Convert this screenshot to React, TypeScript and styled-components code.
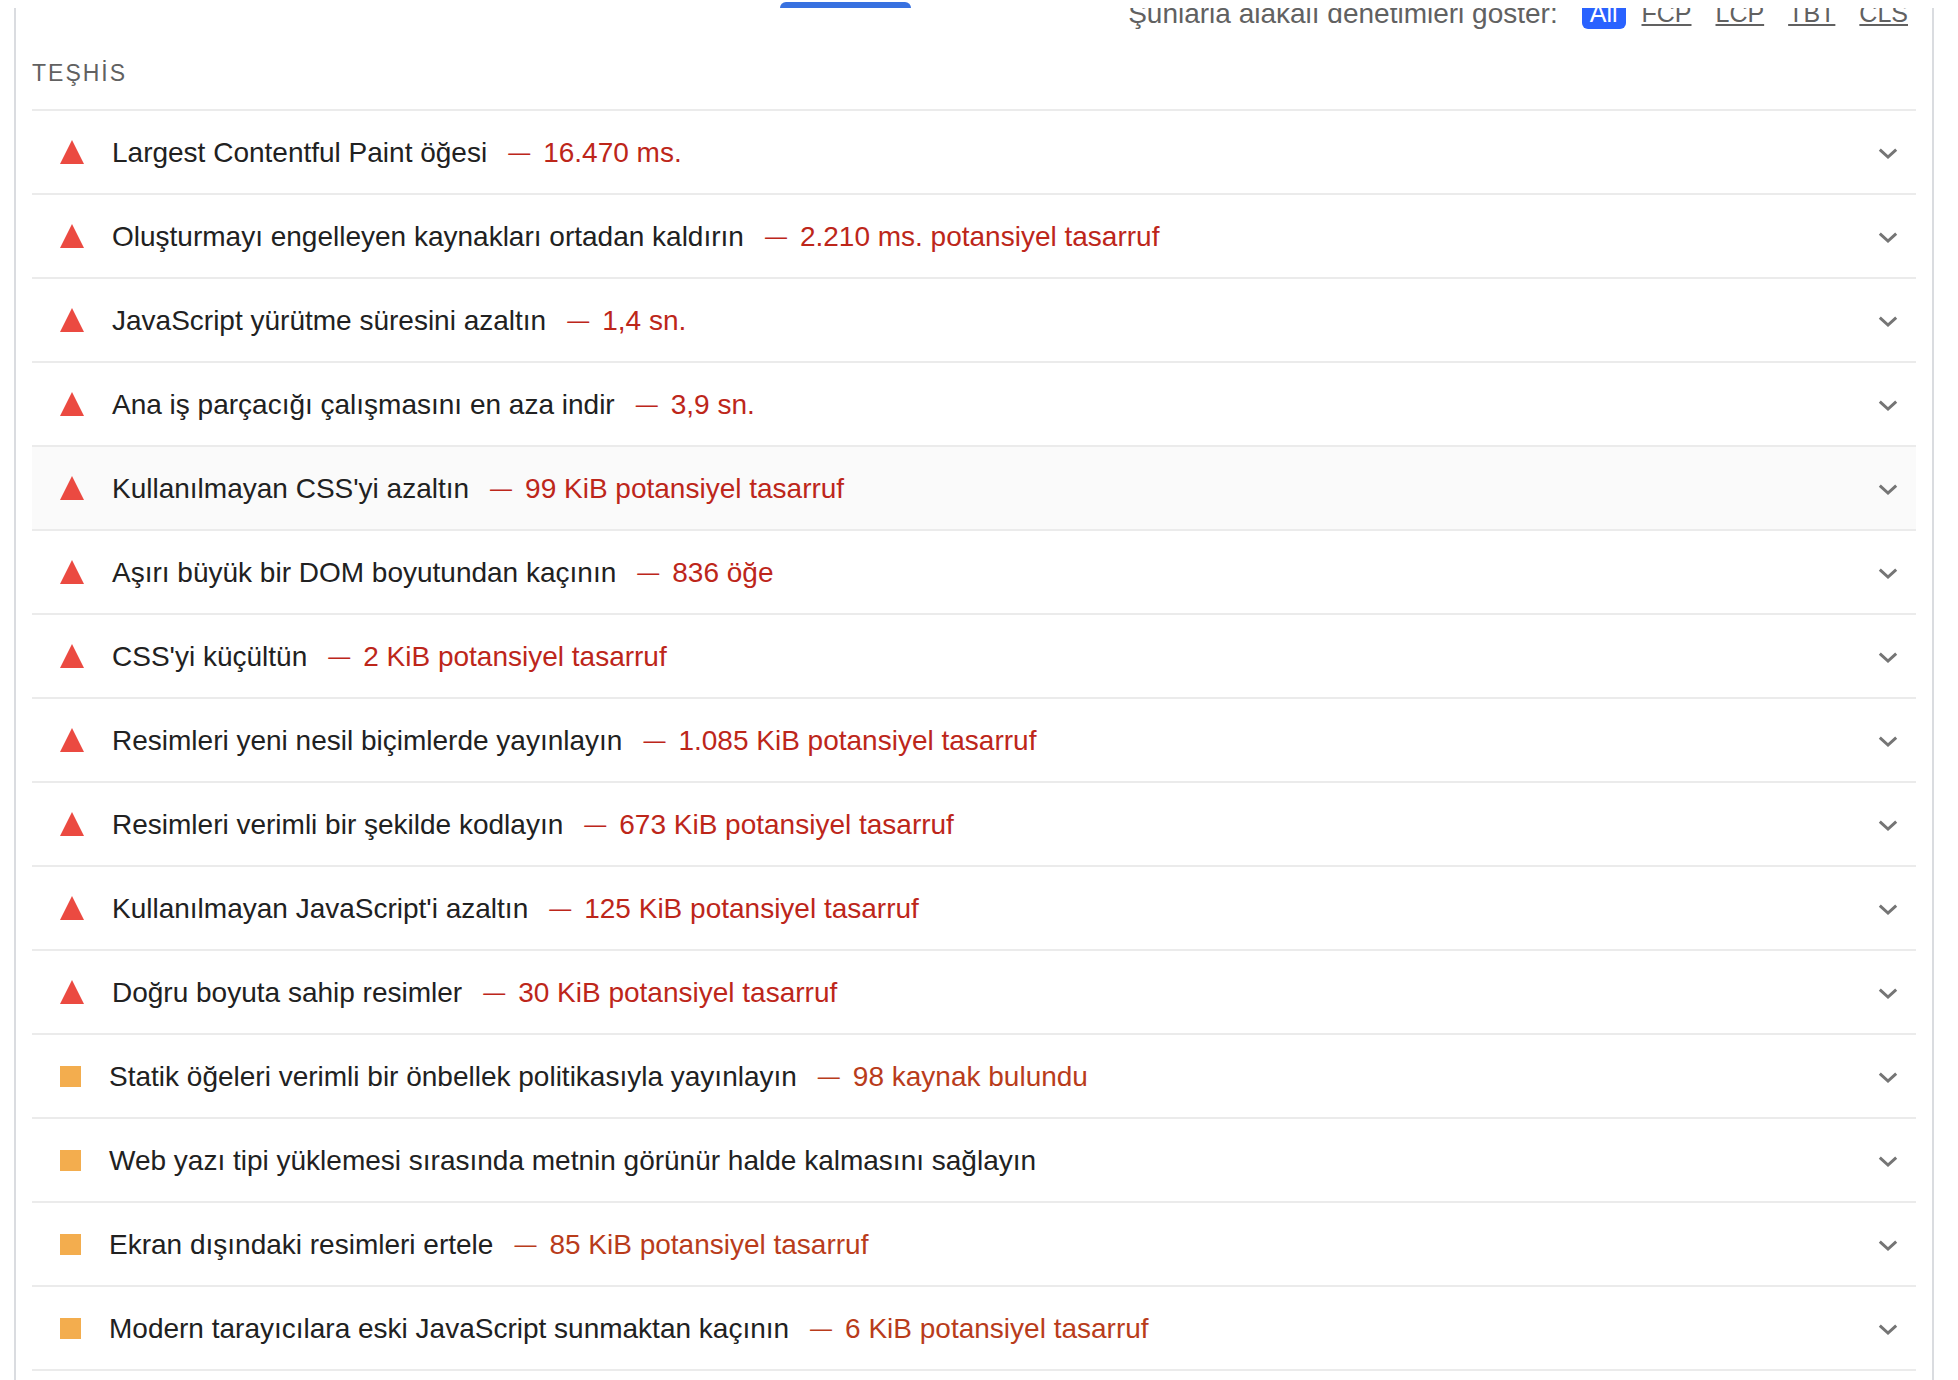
import React, { useState } from "react";
import styled, { createGlobalStyle, css } from "styled-components";

type Level = "fail" | "average";

interface Audit {
  title: string;
  value?: string;
  level: Level;
  active?: boolean;
}

const audits: Audit[] = [
  { level: "fail", title: "Largest Contentful Paint öğesi", value: "16.470 ms." },
  { level: "fail", title: "Oluşturmayı engelleyen kaynakları ortadan kaldırın", value: "2.210 ms. potansiyel tasarruf" },
  { level: "fail", title: "JavaScript yürütme süresini azaltın", value: "1,4 sn." },
  { level: "fail", title: "Ana iş parçacığı çalışmasını en aza indir", value: "3,9 sn." },
  { level: "fail", title: "Kullanılmayan CSS'yi azaltın", value: "99 KiB potansiyel tasarruf", active: true },
  { level: "fail", title: "Aşırı büyük bir DOM boyutundan kaçının", value: "836 öğe" },
  { level: "fail", title: "CSS'yi küçültün", value: "2 KiB potansiyel tasarruf" },
  { level: "fail", title: "Resimleri yeni nesil biçimlerde yayınlayın", value: "1.085 KiB potansiyel tasarruf" },
  { level: "fail", title: "Resimleri verimli bir şekilde kodlayın", value: "673 KiB potansiyel tasarruf" },
  { level: "fail", title: "Kullanılmayan JavaScript'i azaltın", value: "125 KiB potansiyel tasarruf" },
  { level: "fail", title: "Doğru boyuta sahip resimler", value: "30 KiB potansiyel tasarruf" },
  { level: "average", title: "Statik öğeleri verimli bir önbellek politikasıyla yayınlayın", value: "98 kaynak bulundu" },
  { level: "average", title: "Web yazı tipi yüklemesi sırasında metnin görünür halde kalmasını sağlayın" },
  { level: "average", title: "Ekran dışındaki resimleri ertele", value: "85 KiB potansiyel tasarruf" },
  { level: "average", title: "Modern tarayıcılara eski JavaScript sunmaktan kaçının", value: "6 KiB potansiyel tasarruf" },
];

const metrics = ["All", "FCP", "LCP", "TBT", "CLS"];

const GlobalStyle = createGlobalStyle`
  * { box-sizing: border-box; }
  body {
    margin: 0;
    background: #fff;
    color: #212121;
    font-family: "Liberation Sans", Arial, Helvetica, sans-serif;
  }
`;

const TabStrip = styled.div`
  display: flex;
  height: 8px;
  padding: 2px 0 0 780px;
`;

const TabIndicator = styled.div`
  width: 131px;
  height: 6px;
  border-radius: 6px 6px 0 0;
  background: #3871e0;
`;

const Report = styled.main`
  min-height: calc(100vh - 8px);
  margin: 0 24px 0 14px;
  padding: 0 16px;
  border: solid #dadce0;
  border-width: 0 2px;
  overflow: hidden;
`;

const FilterBar = styled.fieldset`
  display: flex;
  justify-content: flex-end;
  align-items: center;
  gap: 8px;
  margin: -12px 0 0;
  padding: 0;
  border: 0;
  color: #616161;
`;

const FilterCaption = styled.span`
  margin-right: 16px;
  padding-top: 2px;
  font-size: 28px;
  line-height: 31px;
`;

const FilterRadio = styled.input`
  position: absolute;
  opacity: 0;
  pointer-events: none;
`;

const FilterChip = styled.label<{ $selected: boolean }>`
  padding: 3px 8px 1px;
  border-radius: 6px;
  font-size: 25px;
  line-height: 29px;
  cursor: pointer;
  text-decoration: underline;
  text-decoration-thickness: 2px;
  text-underline-offset: 2px;
  ${(p) =>
    p.$selected &&
    css`
      background: #2962ff;
      color: #fff;
      text-decoration: none;
    `}
`;

const GroupTitle = styled.h2`
  margin: 29px 0 21px;
  color: #616161;
  font-size: 23px;
  font-weight: 400;
  line-height: 30px;
  letter-spacing: 2px;
`;

const AuditList = styled.div`
  border-bottom: 2px solid #ebebeb;
`;

const AuditItem = styled.details<{ $active?: boolean }>`
  border-top: 2px solid #ebebeb;
  background: ${(p) => (p.$active ? "#fafafa" : "transparent")};
`;

const AuditHeader = styled.summary`
  display: flex;
  align-items: center;
  height: 82px;
  padding: 0 16px 0 28px;
  font-size: 28px;
  line-height: 36px;
  list-style: none;
  cursor: pointer;
  &::-webkit-details-marker { display: none; }
`;

const ScoreIcon = styled.span<{ $level: Level }>`
  flex: none;
  margin-right: 28px;
  ${(p) =>
    p.$level === "fail"
      ? css`
          width: 24px;
          height: 24px;
          background: #eb4a41;
          clip-path: polygon(50% 0, 100% 100%, 0 100%);
        `
      : css`
          width: 21px;
          height: 21px;
          background: #f3ad4e;
        `}
`;

const AuditTitle = styled.span`
  padding-top: 2px;
`;

const AuditValue = styled.span<{ $level: Level }>`
  display: flex;
  align-items: center;
  padding-top: 2px;
  color: ${(p) => (p.$level === "fail" ? "#bd261a" : "#b93c1b")};
`;

const Dash = styled.span`
  margin: 0 13px 0 21px;
  font-size: 22px;
`;

const Chevron = styled.svg`
  flex: none;
  width: 24px;
  height: 24px;
  margin-left: auto;
`;

export default function App() {
  const [metric, setMetric] = useState("All");
  return (
    <>
      <GlobalStyle />
      <TabStrip>
        <TabIndicator />
      </TabStrip>
      <Report lang="tr">
        <FilterBar>
          <FilterCaption>Şunlarla alakalı denetimleri göster:</FilterCaption>
          {metrics.map((m) => (
            <FilterChip key={m} htmlFor={`metric-${m}`} $selected={m === metric}>
              <FilterRadio
                type="radio"
                name="metric"
                id={`metric-${m}`}
                checked={m === metric}
                onChange={() => setMetric(m)}
              />
              {m}
            </FilterChip>
          ))}
        </FilterBar>
        <GroupTitle>TEŞHİS</GroupTitle>
        <AuditList>
          {audits.map((a) => (
            <AuditItem key={a.title} $active={a.active}>
              <AuditHeader>
                <ScoreIcon $level={a.level} />
                <AuditTitle>{a.title}</AuditTitle>
                {a.value && (
                  <AuditValue $level={a.level}>
                    <Dash>—</Dash>
                    <span>{a.value}</span>
                  </AuditValue>
                )}
                <Chevron viewBox="0 0 24 24" fill="none" stroke="#757575" strokeWidth="3" aria-hidden="true">
                  <path d="M3.8 9.6 12 17 20.2 9.6" />
                </Chevron>
              </AuditHeader>
            </AuditItem>
          ))}
        </AuditList>
      </Report>
    </>
  );
}
